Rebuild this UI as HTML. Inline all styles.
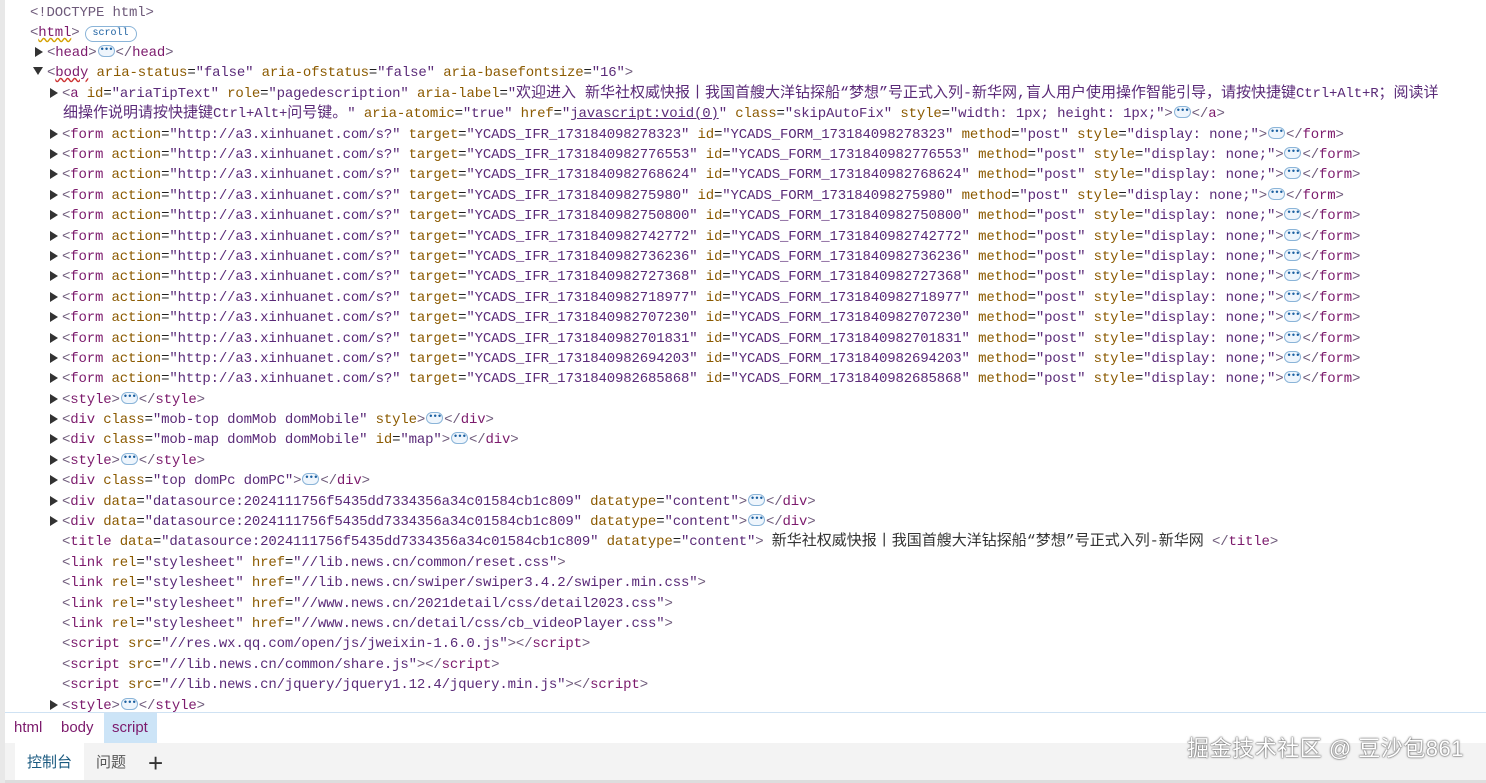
<!DOCTYPE html>
<html><head><style>
html,body{margin:0;padding:0;width:1486px;height:783px;overflow:hidden;background:#fff;}
body{font-family:"Liberation Mono","Noto Sans CJK SC",monospace;font-size:14px;letter-spacing:-0.15px;}
.wrap{position:absolute;left:0;top:0;width:1486px;height:783px;}
.strip{position:absolute;left:0;top:0;width:5px;height:783px;background:#e8e8e8}
.l{position:absolute;white-space:pre;line-height:20px;height:20px;color:#1f1f1f;}
.t{color:#7c1a6c}.b{color:#6e5a7a}.n{color:#8b5a00}.v{color:#5a2a78}.p{color:#333}
.c{font-size:15px;letter-spacing:0}
.tri{display:inline-block;width:0;height:0;border-top:5px solid transparent;border-bottom:5px solid transparent;border-left:8px solid #333;margin-right:4px;vertical-align:-1px}
.down{display:inline-block;width:0;height:0;border-left:5px solid transparent;border-right:5px solid transparent;border-top:8px solid #333;margin-right:4px;vertical-align:1px}
.e{display:inline-block;width:16px;height:11px;border:1px solid #8ab4d8;border-radius:6px;background:#eef5fc;color:#1a5fa0;font-size:9px;line-height:9px;text-align:center;vertical-align:middle;margin:-3px 1px 0;letter-spacing:-1px;box-sizing:border-box;height:12px;width:17px}
.scroll{display:inline-block;border:1px solid #8ab4d8;border-radius:9px;font-size:10px;line-height:14px;padding:0 7px;color:#1a5fa0;margin-left:5px;vertical-align:1px;letter-spacing:0}
.crumb{position:absolute;top:712px;left:5px;right:0;height:30px;border-top:1px solid #cfe2f3;border-bottom:1px solid #cfe2f3;font-family:"Liberation Sans",sans-serif;font-size:15px;color:#7c1a6c;letter-spacing:0}
.crumb span{position:absolute;top:0;line-height:30px}
.tabs{position:absolute;top:743px;left:5px;right:0;height:37px;background:#f3f3f3;font-family:"Liberation Sans","Noto Sans CJK SC",sans-serif;font-size:14px;border-bottom:3px solid #ddd;letter-spacing:0}
.wm{position:absolute;right:22px;top:731px;font-family:"Liberation Sans","Noto Sans CJK SC",sans-serif;font-size:22px;color:#fff;text-shadow:0 0 2px #555,0 0 1px #333;letter-spacing:0.5px}
</style></head><body><div class="wrap"><div class="strip"></div>
<div class="l" style="left:30px;top:3px"><span class="b">&lt;!DOCTYPE html&gt;</span></div>
<div class="l" style="left:30px;top:23px"><span class="b">&lt;</span><span class="t" style="text-decoration:underline wavy #d4a000">html</span><span class="b">&gt;</span><span class="scroll">scroll</span></div>
<div class="l" style="left:35px;top:43px"><span class="tri"></span><span class="b">&lt;</span><span class="t">head</span><span class="b">&gt;</span><span class="e">•••</span><span class="b">&lt;/</span><span class="t">head</span><span class="b">&gt;</span></div>
<div class="l" style="left:33px;top:63px"><span class="down"></span><span class="b">&lt;</span><span class="t" style="text-decoration:underline wavy #c33">body</span> <span class="n">aria-status</span>=<span class="v">"false"</span> <span class="n">aria-ofstatus</span>=<span class="v">"false"</span> <span class="n">aria-basefontsize</span>=<span class="v">"16"</span><span class="b">&gt;</span></div>
<div class="l" style="left:50px;top:84px"><span class="tri"></span><span class="b">&lt;</span><span class="t">a</span> <span class="n">id</span>=<span class="v">"ariaTipText"</span> <span class="n">role</span>=<span class="v">"pagedescription"</span> <span class="n">aria-label</span>=<span class="v">"<span class="c">欢迎进入 新华社权威快报丨我国首艘大洋钻探船“梦想”号正式入列-新华网,盲人用户使用操作智能引导，请按快捷键</span>Ctrl+Alt+R<span class="c">；阅读详</span></span></div>
<div class="l" style="left:63px;top:104px"><span class="v"><span class="c">细操作说明请按快捷键</span>Ctrl+Alt+<span class="c">问号键。</span>"</span> <span class="n">aria-atomic</span>=<span class="v">"true"</span> <span class="n">href</span>=<span class="v">"<u>javascript:void(0)</u>"</span> <span class="n">class</span>=<span class="v">"skipAutoFix"</span> <span class="n">style</span>=<span class="v">"width: 1px; height: 1px;"</span><span class="b">&gt;</span><span class="e">•••</span><span class="b">&lt;/</span><span class="t">a</span><span class="b">&gt;</span></div>
<div class="l" style="left:50px;top:125px"><span class="tri"></span><span class="b">&lt;</span><span class="t">form</span> <span class="n">action</span>=<span class="v">"http://a3.xinhuanet.com/s?"</span> <span class="n">target</span>=<span class="v">"YCADS_IFR_173184098278323"</span> <span class="n">id</span>=<span class="v">"YCADS_FORM_173184098278323"</span> <span class="n">method</span>=<span class="v">"post"</span> <span class="n">style</span>=<span class="v">"display: none;"</span><span class="b">&gt;</span><span class="e">•••</span><span class="b">&lt;/</span><span class="t">form</span><span class="b">&gt;</span></div>
<div class="l" style="left:50px;top:145px"><span class="tri"></span><span class="b">&lt;</span><span class="t">form</span> <span class="n">action</span>=<span class="v">"http://a3.xinhuanet.com/s?"</span> <span class="n">target</span>=<span class="v">"YCADS_IFR_1731840982776553"</span> <span class="n">id</span>=<span class="v">"YCADS_FORM_1731840982776553"</span> <span class="n">method</span>=<span class="v">"post"</span> <span class="n">style</span>=<span class="v">"display: none;"</span><span class="b">&gt;</span><span class="e">•••</span><span class="b">&lt;/</span><span class="t">form</span><span class="b">&gt;</span></div>
<div class="l" style="left:50px;top:165px"><span class="tri"></span><span class="b">&lt;</span><span class="t">form</span> <span class="n">action</span>=<span class="v">"http://a3.xinhuanet.com/s?"</span> <span class="n">target</span>=<span class="v">"YCADS_IFR_1731840982768624"</span> <span class="n">id</span>=<span class="v">"YCADS_FORM_1731840982768624"</span> <span class="n">method</span>=<span class="v">"post"</span> <span class="n">style</span>=<span class="v">"display: none;"</span><span class="b">&gt;</span><span class="e">•••</span><span class="b">&lt;/</span><span class="t">form</span><span class="b">&gt;</span></div>
<div class="l" style="left:50px;top:186px"><span class="tri"></span><span class="b">&lt;</span><span class="t">form</span> <span class="n">action</span>=<span class="v">"http://a3.xinhuanet.com/s?"</span> <span class="n">target</span>=<span class="v">"YCADS_IFR_173184098275980"</span> <span class="n">id</span>=<span class="v">"YCADS_FORM_173184098275980"</span> <span class="n">method</span>=<span class="v">"post"</span> <span class="n">style</span>=<span class="v">"display: none;"</span><span class="b">&gt;</span><span class="e">•••</span><span class="b">&lt;/</span><span class="t">form</span><span class="b">&gt;</span></div>
<div class="l" style="left:50px;top:206px"><span class="tri"></span><span class="b">&lt;</span><span class="t">form</span> <span class="n">action</span>=<span class="v">"http://a3.xinhuanet.com/s?"</span> <span class="n">target</span>=<span class="v">"YCADS_IFR_1731840982750800"</span> <span class="n">id</span>=<span class="v">"YCADS_FORM_1731840982750800"</span> <span class="n">method</span>=<span class="v">"post"</span> <span class="n">style</span>=<span class="v">"display: none;"</span><span class="b">&gt;</span><span class="e">•••</span><span class="b">&lt;/</span><span class="t">form</span><span class="b">&gt;</span></div>
<div class="l" style="left:50px;top:227px"><span class="tri"></span><span class="b">&lt;</span><span class="t">form</span> <span class="n">action</span>=<span class="v">"http://a3.xinhuanet.com/s?"</span> <span class="n">target</span>=<span class="v">"YCADS_IFR_1731840982742772"</span> <span class="n">id</span>=<span class="v">"YCADS_FORM_1731840982742772"</span> <span class="n">method</span>=<span class="v">"post"</span> <span class="n">style</span>=<span class="v">"display: none;"</span><span class="b">&gt;</span><span class="e">•••</span><span class="b">&lt;/</span><span class="t">form</span><span class="b">&gt;</span></div>
<div class="l" style="left:50px;top:247px"><span class="tri"></span><span class="b">&lt;</span><span class="t">form</span> <span class="n">action</span>=<span class="v">"http://a3.xinhuanet.com/s?"</span> <span class="n">target</span>=<span class="v">"YCADS_IFR_1731840982736236"</span> <span class="n">id</span>=<span class="v">"YCADS_FORM_1731840982736236"</span> <span class="n">method</span>=<span class="v">"post"</span> <span class="n">style</span>=<span class="v">"display: none;"</span><span class="b">&gt;</span><span class="e">•••</span><span class="b">&lt;/</span><span class="t">form</span><span class="b">&gt;</span></div>
<div class="l" style="left:50px;top:267px"><span class="tri"></span><span class="b">&lt;</span><span class="t">form</span> <span class="n">action</span>=<span class="v">"http://a3.xinhuanet.com/s?"</span> <span class="n">target</span>=<span class="v">"YCADS_IFR_1731840982727368"</span> <span class="n">id</span>=<span class="v">"YCADS_FORM_1731840982727368"</span> <span class="n">method</span>=<span class="v">"post"</span> <span class="n">style</span>=<span class="v">"display: none;"</span><span class="b">&gt;</span><span class="e">•••</span><span class="b">&lt;/</span><span class="t">form</span><span class="b">&gt;</span></div>
<div class="l" style="left:50px;top:288px"><span class="tri"></span><span class="b">&lt;</span><span class="t">form</span> <span class="n">action</span>=<span class="v">"http://a3.xinhuanet.com/s?"</span> <span class="n">target</span>=<span class="v">"YCADS_IFR_1731840982718977"</span> <span class="n">id</span>=<span class="v">"YCADS_FORM_1731840982718977"</span> <span class="n">method</span>=<span class="v">"post"</span> <span class="n">style</span>=<span class="v">"display: none;"</span><span class="b">&gt;</span><span class="e">•••</span><span class="b">&lt;/</span><span class="t">form</span><span class="b">&gt;</span></div>
<div class="l" style="left:50px;top:308px"><span class="tri"></span><span class="b">&lt;</span><span class="t">form</span> <span class="n">action</span>=<span class="v">"http://a3.xinhuanet.com/s?"</span> <span class="n">target</span>=<span class="v">"YCADS_IFR_1731840982707230"</span> <span class="n">id</span>=<span class="v">"YCADS_FORM_1731840982707230"</span> <span class="n">method</span>=<span class="v">"post"</span> <span class="n">style</span>=<span class="v">"display: none;"</span><span class="b">&gt;</span><span class="e">•••</span><span class="b">&lt;/</span><span class="t">form</span><span class="b">&gt;</span></div>
<div class="l" style="left:50px;top:329px"><span class="tri"></span><span class="b">&lt;</span><span class="t">form</span> <span class="n">action</span>=<span class="v">"http://a3.xinhuanet.com/s?"</span> <span class="n">target</span>=<span class="v">"YCADS_IFR_1731840982701831"</span> <span class="n">id</span>=<span class="v">"YCADS_FORM_1731840982701831"</span> <span class="n">method</span>=<span class="v">"post"</span> <span class="n">style</span>=<span class="v">"display: none;"</span><span class="b">&gt;</span><span class="e">•••</span><span class="b">&lt;/</span><span class="t">form</span><span class="b">&gt;</span></div>
<div class="l" style="left:50px;top:349px"><span class="tri"></span><span class="b">&lt;</span><span class="t">form</span> <span class="n">action</span>=<span class="v">"http://a3.xinhuanet.com/s?"</span> <span class="n">target</span>=<span class="v">"YCADS_IFR_1731840982694203"</span> <span class="n">id</span>=<span class="v">"YCADS_FORM_1731840982694203"</span> <span class="n">method</span>=<span class="v">"post"</span> <span class="n">style</span>=<span class="v">"display: none;"</span><span class="b">&gt;</span><span class="e">•••</span><span class="b">&lt;/</span><span class="t">form</span><span class="b">&gt;</span></div>
<div class="l" style="left:50px;top:369px"><span class="tri"></span><span class="b">&lt;</span><span class="t">form</span> <span class="n">action</span>=<span class="v">"http://a3.xinhuanet.com/s?"</span> <span class="n">target</span>=<span class="v">"YCADS_IFR_1731840982685868"</span> <span class="n">id</span>=<span class="v">"YCADS_FORM_1731840982685868"</span> <span class="n">method</span>=<span class="v">"post"</span> <span class="n">style</span>=<span class="v">"display: none;"</span><span class="b">&gt;</span><span class="e">•••</span><span class="b">&lt;/</span><span class="t">form</span><span class="b">&gt;</span></div>
<div class="l" style="left:50px;top:390px"><span class="tri"></span><span class="b">&lt;</span><span class="t">style</span><span class="b">&gt;</span><span class="e">•••</span><span class="b">&lt;/</span><span class="t">style</span><span class="b">&gt;</span></div>
<div class="l" style="left:50px;top:410px"><span class="tri"></span><span class="b">&lt;</span><span class="t">div</span> <span class="n">class</span>=<span class="v">"mob-top domMob domMobile"</span> <span class="n">style</span><span class="b">&gt;</span><span class="e">•••</span><span class="b">&lt;/</span><span class="t">div</span><span class="b">&gt;</span></div>
<div class="l" style="left:50px;top:430px"><span class="tri"></span><span class="b">&lt;</span><span class="t">div</span> <span class="n">class</span>=<span class="v">"mob-map domMob domMobile"</span> <span class="n">id</span>=<span class="v">"map"</span><span class="b">&gt;</span><span class="e">•••</span><span class="b">&lt;/</span><span class="t">div</span><span class="b">&gt;</span></div>
<div class="l" style="left:50px;top:451px"><span class="tri"></span><span class="b">&lt;</span><span class="t">style</span><span class="b">&gt;</span><span class="e">•••</span><span class="b">&lt;/</span><span class="t">style</span><span class="b">&gt;</span></div>
<div class="l" style="left:50px;top:471px"><span class="tri"></span><span class="b">&lt;</span><span class="t">div</span> <span class="n">class</span>=<span class="v">"top domPc domPC"</span><span class="b">&gt;</span><span class="e">•••</span><span class="b">&lt;/</span><span class="t">div</span><span class="b">&gt;</span></div>
<div class="l" style="left:50px;top:492px"><span class="tri"></span><span class="b">&lt;</span><span class="t">div</span> <span class="n">data</span>=<span class="v">"datasource:2024111756f5435dd7334356a34c01584cb1c809"</span> <span class="n">datatype</span>=<span class="v">"content"</span><span class="b">&gt;</span><span class="e">•••</span><span class="b">&lt;/</span><span class="t">div</span><span class="b">&gt;</span></div>
<div class="l" style="left:50px;top:512px"><span class="tri"></span><span class="b">&lt;</span><span class="t">div</span> <span class="n">data</span>=<span class="v">"datasource:2024111756f5435dd7334356a34c01584cb1c809"</span> <span class="n">datatype</span>=<span class="v">"content"</span><span class="b">&gt;</span><span class="e">•••</span><span class="b">&lt;/</span><span class="t">div</span><span class="b">&gt;</span></div>
<div class="l" style="left:62px;top:532px"><span class="b">&lt;</span><span class="t">title</span> <span class="n">data</span>=<span class="v">"datasource:2024111756f5435dd7334356a34c01584cb1c809"</span> <span class="n">datatype</span>=<span class="v">"content"</span><span class="b">&gt;</span> <span class="p c">新华社权威快报丨我国首艘大洋钻探船“梦想”号正式入列-新华网</span> <span class="b">&lt;/</span><span class="t">title</span><span class="b">&gt;</span></div>
<div class="l" style="left:62px;top:553px"><span class="b">&lt;</span><span class="t">link</span> <span class="n">rel</span>=<span class="v">"stylesheet"</span> <span class="n">href</span>=<span class="v">"//lib.news.cn/common/reset.css"</span><span class="b">&gt;</span></div>
<div class="l" style="left:62px;top:573px"><span class="b">&lt;</span><span class="t">link</span> <span class="n">rel</span>=<span class="v">"stylesheet"</span> <span class="n">href</span>=<span class="v">"//lib.news.cn/swiper/swiper3.4.2/swiper.min.css"</span><span class="b">&gt;</span></div>
<div class="l" style="left:62px;top:594px"><span class="b">&lt;</span><span class="t">link</span> <span class="n">rel</span>=<span class="v">"stylesheet"</span> <span class="n">href</span>=<span class="v">"//www.news.cn/2021detail/css/detail2023.css"</span><span class="b">&gt;</span></div>
<div class="l" style="left:62px;top:614px"><span class="b">&lt;</span><span class="t">link</span> <span class="n">rel</span>=<span class="v">"stylesheet"</span> <span class="n">href</span>=<span class="v">"//www.news.cn/detail/css/cb_videoPlayer.css"</span><span class="b">&gt;</span></div>
<div class="l" style="left:62px;top:634px"><span class="b">&lt;</span><span class="t">script</span> <span class="n">src</span>=<span class="v">"//res.wx.qq.com/open/js/jweixin-1.6.0.js"</span><span class="b">&gt;&lt;/</span><span class="t">script</span><span class="b">&gt;</span></div>
<div class="l" style="left:62px;top:655px"><span class="b">&lt;</span><span class="t">script</span> <span class="n">src</span>=<span class="v">"//lib.news.cn/common/share.js"</span><span class="b">&gt;&lt;/</span><span class="t">script</span><span class="b">&gt;</span></div>
<div class="l" style="left:62px;top:675px"><span class="b">&lt;</span><span class="t">script</span> <span class="n">src</span>=<span class="v">"//lib.news.cn/jquery/jquery1.12.4/jquery.min.js"</span><span class="b">&gt;&lt;/</span><span class="t">script</span><span class="b">&gt;</span></div>
<div class="l" style="left:50px;top:696px"><span class="tri"></span><span class="b">&lt;</span><span class="t">style</span><span class="b">&gt;</span><span class="e">•••</span><span class="b">&lt;/</span><span class="t">style</span><span class="b">&gt;</span></div>
<div class="crumb" style="background:#fff"><span style="left:9px">html</span><span style="left:56px">body</span><span style="left:99px;width:53px;background:#cce4f7;padding-left:8px;box-sizing:border-box">script</span></div>
<div class="tabs"><span style="position:absolute;left:10px;top:0;width:69px;height:37px;background:#fff;line-height:40px;text-align:center;color:#1a5a80;font-size:15px">控制台</span><span style="position:absolute;left:91px;line-height:40px;color:#555;font-size:15px">问题</span><span style="position:absolute;left:143px;top:6px;font-size:26px;line-height:28px;color:#333;font-weight:300">+</span></div>
<div class="wm">掘金技术社区 @ 豆沙包861</div>
</div></body></html>
